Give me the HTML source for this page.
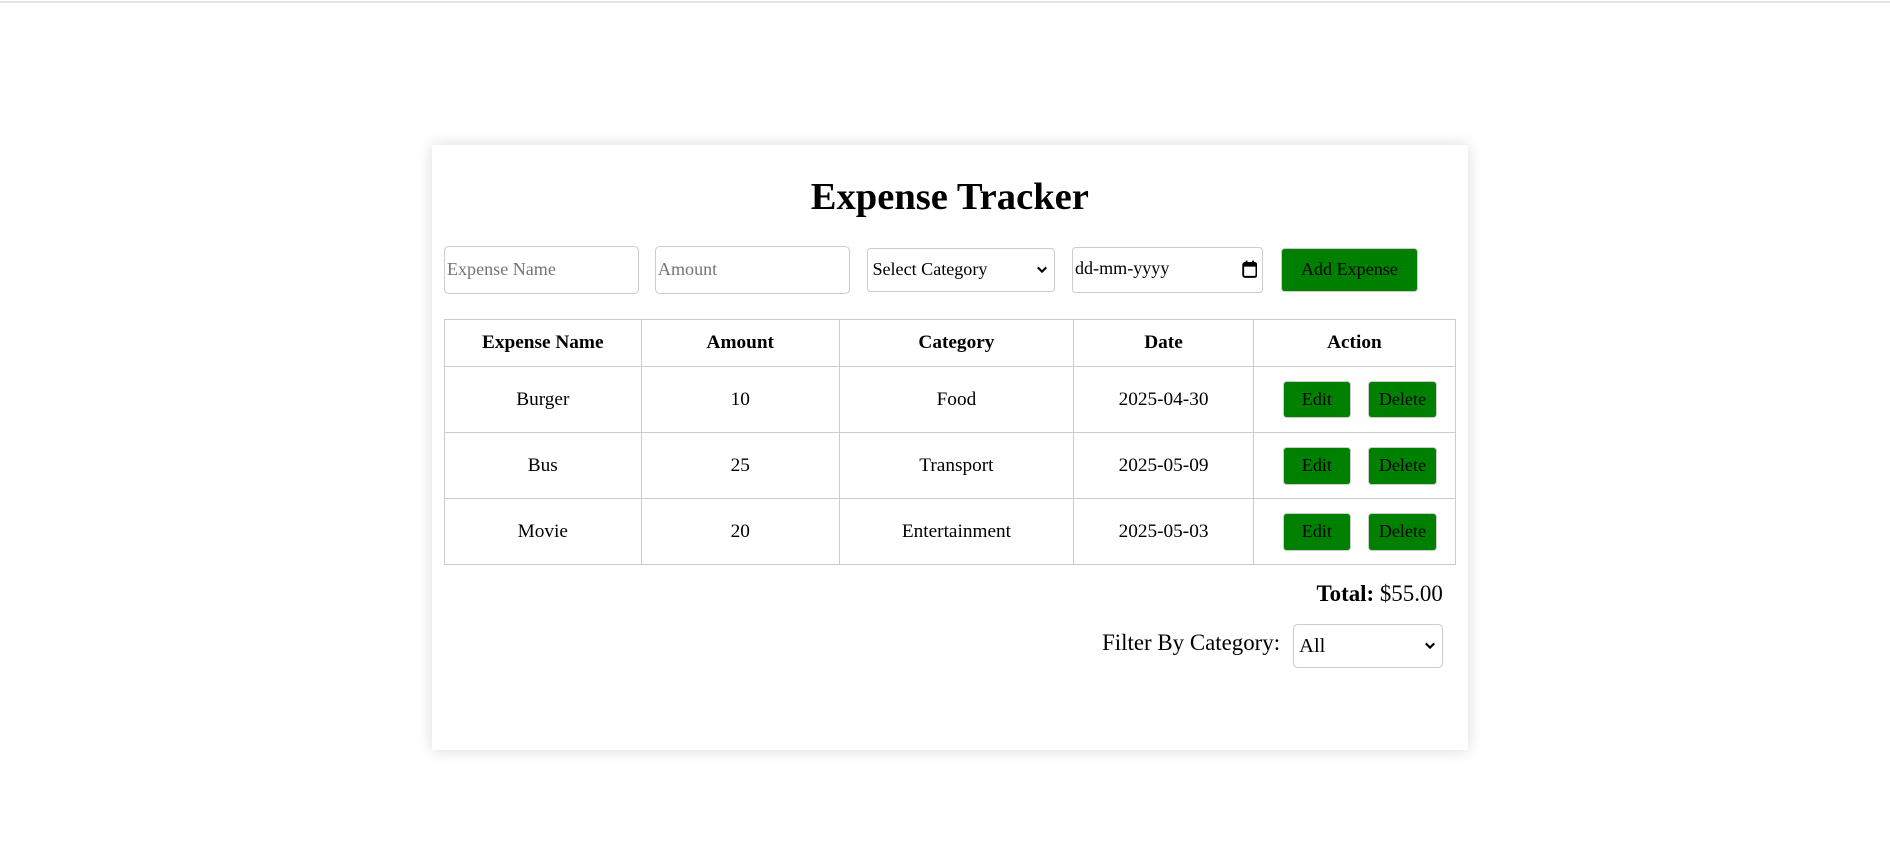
<!DOCTYPE html>
<html><head><meta charset="utf-8">
<style>
html,body{margin:0;padding:0;background:#fff;width:1890px;height:862px;overflow:hidden}
.topline{position:absolute;left:0;top:1px;width:1890px;height:2px;background:#e4e4e4}
#w{position:absolute;left:0;top:0;width:1568px;height:716px;zoom:1.20536;font-family:"Liberation Serif",serif;color:#000}
.a{position:absolute;box-sizing:border-box}
.card{left:358px;top:120px;width:860px;height:502px;background:#fff;box-shadow:0 0 12px rgba(0,0,0,0.15)}
h1{position:absolute;margin:0;left:358px;width:860px;top:145px;text-align:center;font-size:32px;font-weight:bold;line-height:38px}
.inp{border:1px solid #ccc;border-radius:4px;background:#fff;font-size:15px;line-height:37px;padding-left:2px;color:#757575}
.sel{border:1px solid #ccc;border-radius:3px;background:#fff;font-size:15px;color:#000;padding-left:4px}
.btn{background:#008000;border:1px solid #ccc;border-radius:3px;font-size:15px;text-align:center;color:#000}
.chev{position:absolute;right:5px;top:50%;width:10px;height:8px;margin-top:-4px}
table{position:absolute;left:368px;top:265px;width:840px;border-collapse:collapse;font-size:16px}
td,th{border:1px solid #ccc;text-align:center;padding:0}
th{height:38px;font-weight:bold}
td{height:54px}
</style></head><body>
<div class="topline"></div>
<div id="w">
<div class="a card"></div>
<h1>Expense Tracker</h1>
<div class="a inp" style="left:368px;top:204px;width:162px;height:40px">Expense Name</div>
<div class="a inp" style="left:543px;top:204px;width:162px;height:40px">Amount</div>
<div class="a sel" style="left:719px;top:206px;width:156px;height:36px;line-height:34px">Select Category<svg class="chev" viewBox="0 0 10 8"><path d="M1.5 2 L5 5.5 L8.5 2" fill="none" stroke="#000" stroke-width="1.8"/></svg></div>
<div class="a sel" style="left:889px;top:205px;width:159px;height:38px;line-height:34px;padding-left:2px">dd-mm-yyyy<svg style="position:absolute;right:4px;top:10px" width="13" height="15" viewBox="0 0 13 15"><rect x="1" y="2.5" width="11" height="11.5" rx="1.5" fill="none" stroke="#000" stroke-width="1.6"/><rect x="1" y="2.5" width="11" height="3" fill="#000"/><rect x="3" y="0.5" width="1.6" height="3" fill="#000"/><rect x="8.4" y="0.5" width="1.6" height="3" fill="#000"/></svg></div>
<div class="a btn" style="left:1063px;top:206px;width:113px;height:36px;line-height:34px">Add Expense</div>
<table>
<tr><th style="width:163px">Expense Name</th><th style="width:163px">Amount</th><th style="width:194px">Category</th><th style="width:148px">Date</th><th>Action</th></tr>
<tr><td>Burger</td><td>10</td><td>Food</td><td>2025-04-30</td><td></td></tr>
<tr><td>Bus</td><td>25</td><td>Transport</td><td>2025-05-09</td><td></td></tr>
<tr><td>Movie</td><td>20</td><td>Entertainment</td><td>2025-05-03</td><td></td></tr>
</table>
<div class="a btn" style="left:1064px;top:316px;width:57px;height:31px;line-height:29px">Edit</div>
<div class="a btn" style="left:1135px;top:316px;width:57px;height:31px;line-height:29px">Delete</div>
<div class="a btn" style="left:1064px;top:371px;width:57px;height:31px;line-height:29px">Edit</div>
<div class="a btn" style="left:1135px;top:371px;width:57px;height:31px;line-height:29px">Delete</div>
<div class="a btn" style="left:1064px;top:426px;width:57px;height:31px;line-height:29px">Edit</div>
<div class="a btn" style="left:1135px;top:426px;width:57px;height:31px;line-height:29px">Delete</div>
<div class="a" style="right:371px;top:481px;font-size:19px;line-height:24px;white-space:nowrap"><b>Total:</b> $55.00</div>
<div class="a" style="right:506px;top:522px;font-size:19px;line-height:24px;white-space:nowrap">Filter By Category:</div>
<div class="a sel" style="left:1073px;top:518px;width:124px;height:36px;line-height:36px;font-size:17px;border-radius:4px">All<svg class="chev" viewBox="0 0 10 8"><path d="M1.5 2 L5 5.5 L8.5 2" fill="none" stroke="#000" stroke-width="1.8"/></svg></div>
</div>
</body></html>
